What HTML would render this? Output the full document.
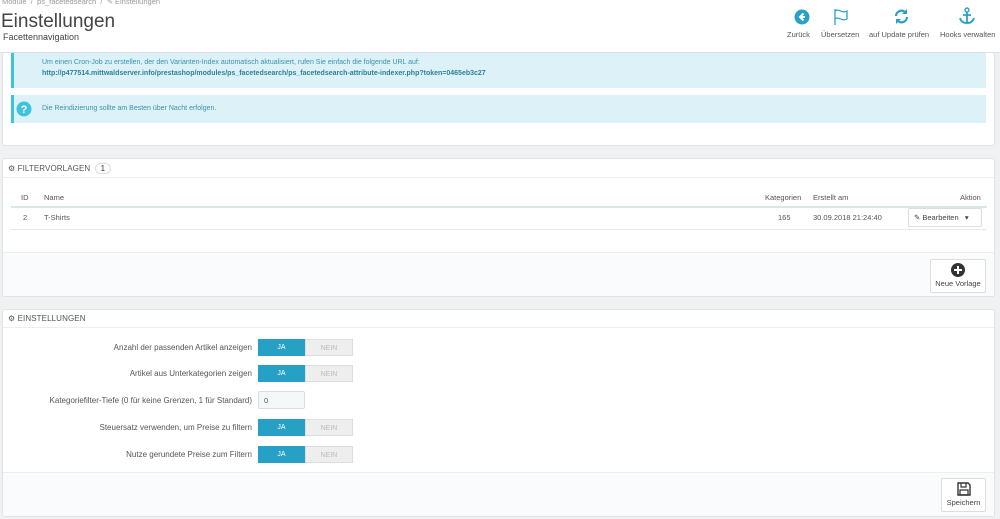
<!DOCTYPE html>
<html><head><meta charset="utf-8"><style>
*{box-sizing:border-box;margin:0;padding:0}
body{width:1000px;height:519px;overflow:hidden;background:#eff1f2;font-family:"Liberation Sans",sans-serif;color:#555;position:relative;font-size:8px}
.a{position:absolute}
.hdr{left:0;top:0;width:1000px;height:53px;background:#fff;border-bottom:1px solid #dde}
.panel{background:#fff;border:1px solid #dfe3e6;border-radius:3px}
.alert{background:#dcf2f8;border-left:3px solid #3fc2dd;color:#3b90a8}
.ph{font-size:8px;color:#555;letter-spacing:.1px;border-bottom:1px solid #eee}
.tog{width:95px;height:17px;display:flex;font-size:7px}
.tog .j{width:47px;background:#27a0c6;color:#fff;text-align:center;line-height:17px}
.tog .n{width:48px;background:#eee;color:#bbb;text-align:center;line-height:17px;border:1px solid #ddd}
.lbl{right:748px;font-size:8px;color:#555;text-align:right;white-space:nowrap}
.tb{color:#555;text-align:center;font-size:7.5px}
</style></head><body>
<div class="a hdr"></div>
<div class="a" style="left:2px;top:-3px;font-size:7.5px;color:#999">Module &nbsp;/&nbsp; ps_facetedsearch &nbsp;/&nbsp; ✎ Einstellungen</div>
<div class="a" style="left:1px;top:11px;font-size:19px;color:#444">Einstellungen</div>
<div class="a" style="left:3px;top:32px;font-size:9px;color:#444">Facettennavigation</div>
<svg class="a" style="left:794px;top:9px" width="16" height="16"><circle cx="8" cy="8" r="7.5" fill="#2aa0c8"/><path d="M9.5 4.5 6 8l3.5 3.5M6 8h5" stroke="#fff" stroke-width="2" fill="none"/></svg>
<svg class="a" style="left:833px;top:8px" width="18" height="18"><path d="M2 1v16M2 3c4-3 7 3 12 0v8c-5 3-8-3-12 0" stroke="#2aa0c8" stroke-width="1.3" fill="none"/></svg>
<svg class="a" style="left:893px;top:8px" width="17" height="17"><path d="M3 8a5.5 5.5 0 0 1 10-3M14 9a5.5 5.5 0 0 1-10 3" stroke="#2aa0c8" stroke-width="2.2" fill="none"/><path d="M14 1v5h-5zM3 16v-5h5z" fill="#2aa0c8"/></svg>
<svg class="a" style="left:958px;top:7px" width="18" height="18"><circle cx="9" cy="3" r="2" stroke="#2aa0c8" stroke-width="1.4" fill="none"/><path d="M9 5v11M5 8h8M2 11c1 4 4 5 7 5s6-1 7-5" stroke="#2aa0c8" stroke-width="1.8" fill="none"/></svg>
<div class="a tb" style="left:787px;top:30px">Zurück</div>
<div class="a tb" style="left:821px;top:30px">Übersetzen</div>
<div class="a tb" style="left:869px;top:30px">auf Update prüfen</div>
<div class="a tb" style="left:940px;top:30px">Hooks verwalten</div>

<div class="a panel" style="left:2px;top:53px;width:993px;height:93px;border-top:none"></div>
<div class="a alert" style="left:11px;top:53px;width:975px;height:35px;font-size:7px;padding:4px 0 0 28px;line-height:11px">Um einen Cron-Job zu erstellen, der den Varianten-Index automatisch aktualisiert, rufen Sie einfach die folgende URL auf:<br><b style="color:#2d7f96">http://p477514.mittwaldserver.info/prestashop/modules/ps_facetedsearch/ps_facetedsearch-attribute-indexer.php?token=0465eb3c27</b></div>
<div class="a alert" style="left:11px;top:95px;width:975px;height:28px;font-size:7px;padding:10px 0 0 28px">Die Reindizierung sollte am Besten über Nacht erfolgen.</div>
<svg class="a" style="left:16px;top:101px" width="16" height="16"><circle cx="8" cy="8" r="7.5" fill="#3fc2dd"/><text x="8" y="12" font-size="11" font-weight="bold" fill="#fff" text-anchor="middle" font-family="Liberation Sans">?</text></svg>

<div class="a panel" style="left:2px;top:158px;width:993px;height:139px"></div>
<div class="a" style="left:3px;top:252px;width:991px;height:44px;background:#fafbfc;border-top:1px solid #eee"></div>
<div class="a ph" style="left:3px;top:159px;width:991px;height:19px;padding:4px 0 0 5px">⚙ FILTERVORLAGEN <span style="display:inline-block;border:1px solid #ddd;border-radius:8px;padding:0 5px;margin-left:2px;font-size:8px;color:#333">1</span></div>
<div class="a" style="left:21px;top:193px;font-size:7.5px">ID</div>
<div class="a" style="left:44px;top:193px;font-size:7.5px">Name</div>
<div class="a" style="left:765px;top:193px;font-size:7.5px">Kategorien</div>
<div class="a" style="left:813px;top:193px;font-size:7.5px">Erstellt am</div>
<div class="a" style="left:960px;top:193px;font-size:7.5px">Aktion</div>
<div class="a" style="left:11px;top:206px;width:976px;height:2px;background:#dbe6ea"></div>
<div class="a" style="left:23px;top:213px;font-size:7.5px">2</div>
<div class="a" style="left:44px;top:213px;font-size:7.5px">T-Shirts</div>
<div class="a" style="left:778px;top:213px;font-size:7.5px">165</div>
<div class="a" style="left:813px;top:213px;font-size:7.5px">30.09.2018 21:24:40</div>
<div class="a" style="left:908px;top:208px;width:74px;height:19px;border:1px solid #ddd;border-radius:2px;font-size:7.5px;padding:4px 0 0 5px;color:#444">✎ Bearbeiten &nbsp;&nbsp;▾</div>
<div class="a" style="left:11px;top:229px;width:976px;height:1px;background:#e8e8e8"></div>
<div class="a" style="left:930px;top:259px;width:56px;height:34px;background:#fff;border:1px solid #ddd;border-radius:2px;text-align:center;font-size:7.5px;color:#444;padding-top:3px"><svg width="14" height="14"><circle cx="7" cy="7" r="7" fill="#333"/><path d="M7 3v8M3 7h8" stroke="#fff" stroke-width="2"/></svg><br>Neue Vorlage</div>

<div class="a panel" style="left:2px;top:309px;width:993px;height:208px"></div>
<div class="a" style="left:3px;top:472px;width:991px;height:44px;background:#fafbfc;border-top:1px solid #eee"></div>
<div class="a ph" style="left:3px;top:310px;width:991px;height:18px;padding:4px 0 0 5px">⚙ EINSTELLUNGEN</div>
<div class="a lbl" style="top:343px">Anzahl der passenden Artikel anzeigen</div>
<div class="a tog" style="left:258px;top:339px"><div class="j">JA</div><div class="n">NEIN</div></div>
<div class="a lbl" style="top:369px">Artikel aus Unterkategorien zeigen</div>
<div class="a tog" style="left:258px;top:365px"><div class="j">JA</div><div class="n">NEIN</div></div>
<div class="a lbl" style="top:396px">Kategoriefilter-Tiefe (0 für keine Grenzen, 1 für Standard)</div>
<div class="a" style="left:258px;top:391px;width:47px;height:18px;background:#f5f8f9;border:1px solid #ddd;border-radius:2px;font-size:7.5px;padding:4px 0 0 5px">0</div>
<div class="a lbl" style="top:423px">Steuersatz verwenden, um Preise zu filtern</div>
<div class="a tog" style="left:258px;top:419px"><div class="j">JA</div><div class="n">NEIN</div></div>
<div class="a lbl" style="top:450px">Nutze gerundete Preise zum Filtern</div>
<div class="a tog" style="left:258px;top:446px"><div class="j">JA</div><div class="n">NEIN</div></div>
<div class="a" style="left:941px;top:478px;width:45px;height:34px;background:#fff;border:1px solid #ddd;border-radius:2px;text-align:center;font-size:7.5px;color:#444;padding-top:3px"><svg width="14" height="14"><path d="M1 1h10l2 2v10H1z" stroke="#333" stroke-width="1.4" fill="none"/><path d="M4 1v4h5V1M3 8h8v5H3z" stroke="#333" stroke-width="1.2" fill="none"/></svg><br>Speichern</div>
</body></html>
